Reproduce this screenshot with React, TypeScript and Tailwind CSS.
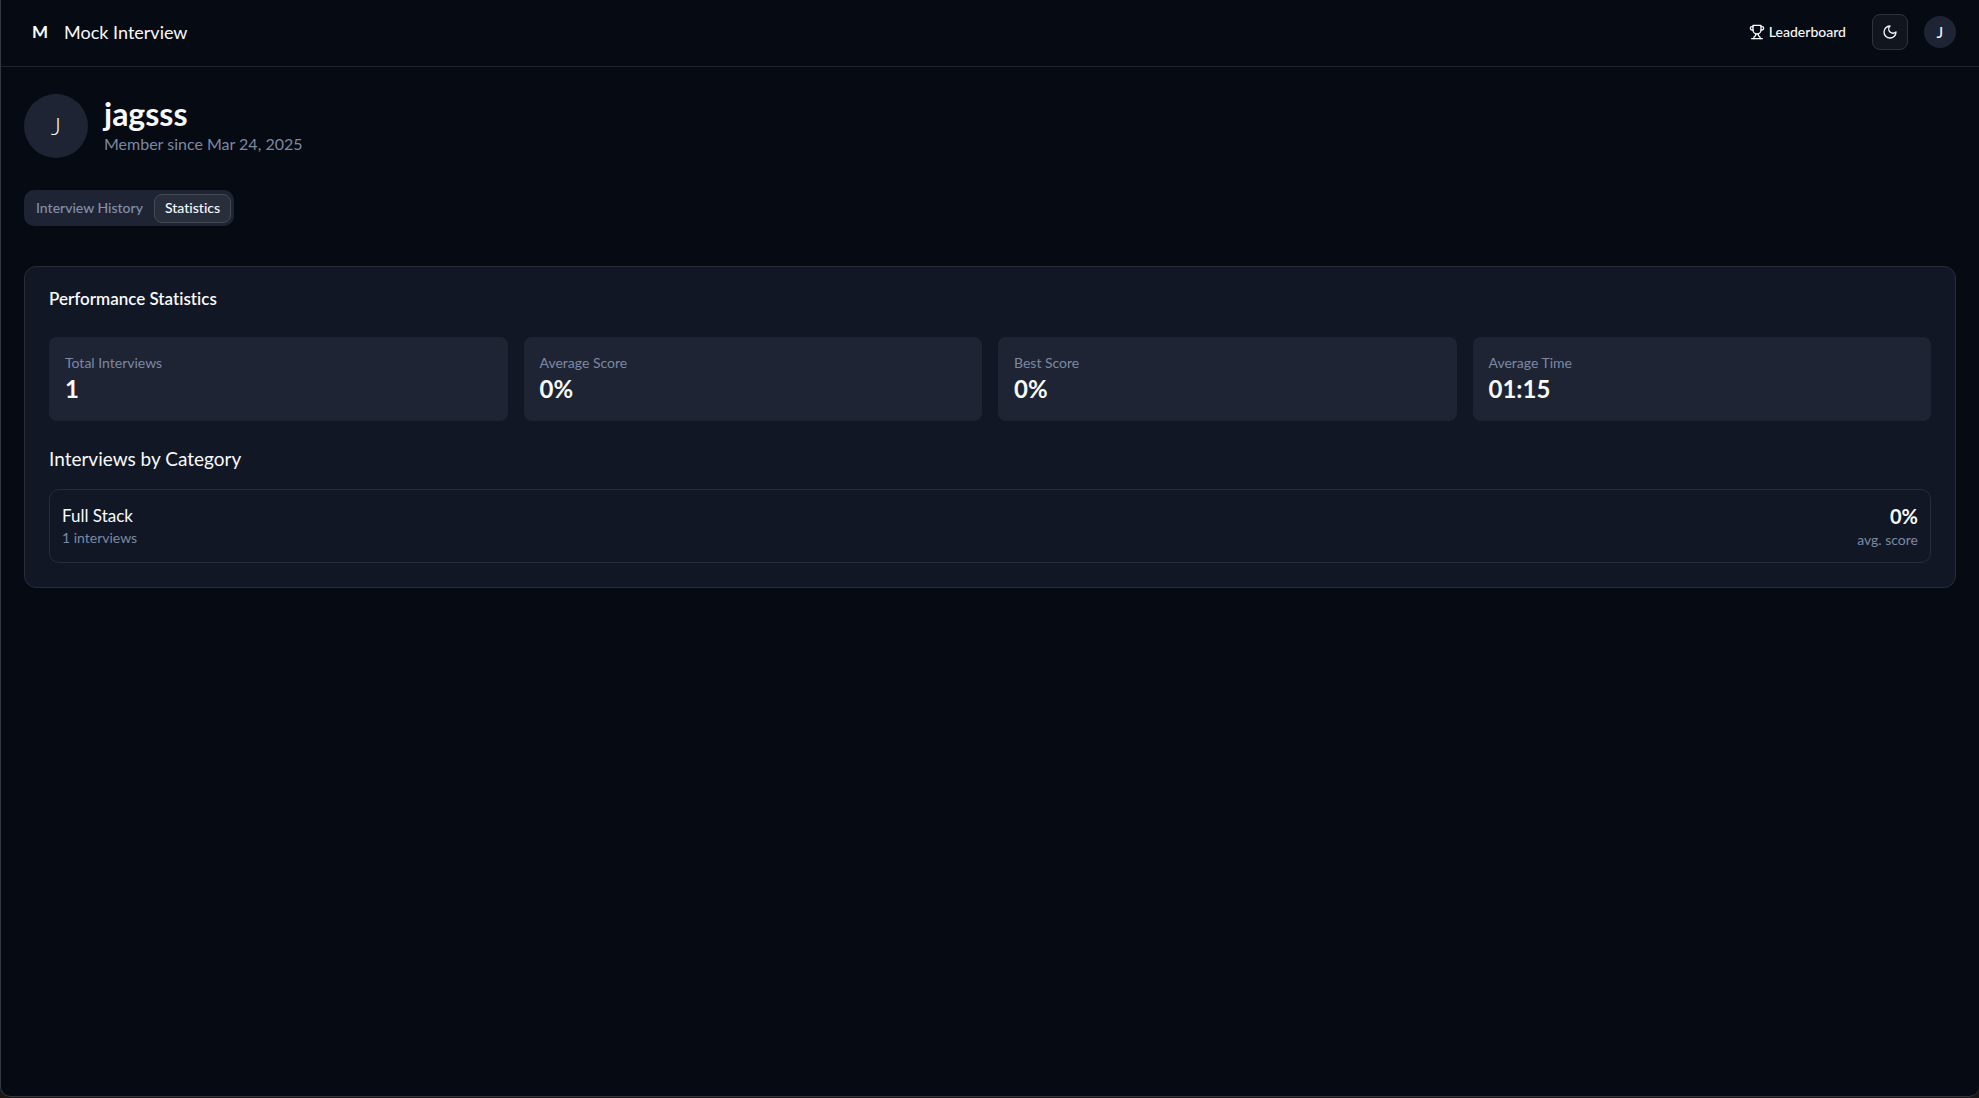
import React from "react";

const stats = [
  { label: "Total Interviews", value: "1" },
  { label: "Average Score", value: "0%" },
  { label: "Best Score", value: "0%" },
  { label: "Average Time", value: "01:15" },
];

const categories = [{ name: "Full Stack", count: 1, score: "0%" }];

function Icon({ paths }: { paths: string[] }) {
  return (
    <svg
      viewBox="0 0 24 24"
      className="size-4 shrink-0"
      fill="none"
      stroke="currentColor"
      strokeWidth="2"
      strokeLinecap="round"
      strokeLinejoin="round"
      aria-hidden="true"
    >
      {paths.map((d) => (
        <path key={d} d={d} />
      ))}
    </svg>
  );
}

const trophy = [
  "M6 9H4.5a2.5 2.5 0 0 1 0-5H6",
  "M18 9h1.5a2.5 2.5 0 0 0 0-5H18",
  "M4 22h16",
  "M10 14.66V17c0 .55-.47.98-.97 1.21C7.85 18.75 7 20.24 7 22",
  "M14 14.66V17c0 .55.47.98.97 1.21C16.15 18.75 17 20.24 17 22",
  "M18 2H6v7a6 6 0 0 0 12 0V2Z",
];

const moon = ["M12 3a6 6 0 0 0 9 9 9 9 0 1 1-9-9Z"];

function Header() {
  return (
    <header className="border-b border-[#20242f] px-[23px] pb-0.5">
      <div className="flex h-16 items-center justify-between">
        <a href="#" className="flex h-9 items-center gap-4 pl-2">
          <span className="text-[17px] leading-6 font-bold">M</span>
          <span className="text-lg leading-6">Mock Interview</span>
        </a>
        <div className="flex items-center gap-4">
          <a href="#" className="flex h-9 items-center gap-1 px-2.5 text-sm font-medium">
            <Icon paths={trophy} />
            Leaderboard
          </a>
          <button
            type="button"
            aria-label="Toggle theme"
            className="flex size-9 items-center justify-center rounded-lg border border-[#2f333d] bg-[#11151e]"
          >
            <Icon paths={moon} />
          </button>
          <button
            type="button"
            aria-label="Account"
            className="flex size-8 items-center justify-center rounded-full bg-[#1e2433] text-base"
          >
            J
          </button>
        </div>
      </div>
    </header>
  );
}

function Profile() {
  return (
    <section className="mb-8 flex items-center gap-4">
      <div className="flex size-16 items-center justify-center rounded-full bg-[#1e2433] text-2xl font-light">J</div>
      <div>
        <h1 className="text-[32px] leading-9 font-bold">jagsss</h1>
        <p className="leading-6 text-[#7c89a3]">Member since Mar 24, 2025</p>
      </div>
    </section>
  );
}

function Tabs() {
  return (
    <div
      role="tablist"
      className="mb-10 flex h-9 w-fit items-center gap-0.5 rounded-[10px] bg-[#1e2433] p-[3px] text-sm font-medium"
    >
      <button
        type="button"
        role="tab"
        aria-selected="false"
        className="h-[29px] rounded-lg border border-transparent px-2 text-[#8290ab]"
      >
        Interview History
      </button>
      <button
        type="button"
        role="tab"
        aria-selected="true"
        className="h-[29px] rounded-lg border border-[#464a55] bg-[#292e3c] px-2.5"
      >
        Statistics
      </button>
    </div>
  );
}

function Statistics() {
  return (
    <section className="rounded-xl border border-[#2a2c38] bg-[#111724] p-6">
      <h2 className="mb-[30px] text-[17px] leading-4 font-semibold">Performance Statistics</h2>
      <dl className="mb-6 grid grid-cols-4 gap-4">
        {stats.map((s) => (
          <div key={s.label} className="rounded-lg bg-[#1e2433] p-4">
            <dt className="text-sm text-[#7c89a3]">{s.label}</dt>
            <dd className="text-2xl font-bold">{s.value}</dd>
          </div>
        ))}
      </dl>
      <h3 className="mb-4 text-[19px] leading-7">Interviews by Category</h3>
      {categories.map((c) => (
        <div key={c.name} className="flex items-center justify-between rounded-[10px] border border-[#2a2c38] p-3">
          <div>
            <p className="text-[17px] leading-6">{c.name}</p>
            <p className="text-sm text-[#7c89a3]">{c.count} interviews</p>
          </div>
          <div className="text-right">
            <p className="text-xl font-bold">{c.score}</p>
            <p className="text-sm text-[#7c89a3]">avg. score</p>
          </div>
        </div>
      ))}
    </section>
  );
}

export default function App() {
  return (
    <div className="flex min-h-screen flex-col bg-[#1c1712] pb-px font-['Lato',sans-serif] text-[#f8fafc] [font-variant-ligatures:none]">
      <div className="flex flex-1 flex-col rounded-b-[10px] border-b border-l border-[#34373f] bg-[#060a13]">
        <Header />
        <main className="px-[23px] pt-[27px] pb-8">
          <Profile />
          <Tabs />
          <Statistics />
        </main>
      </div>
    </div>
  );
}
